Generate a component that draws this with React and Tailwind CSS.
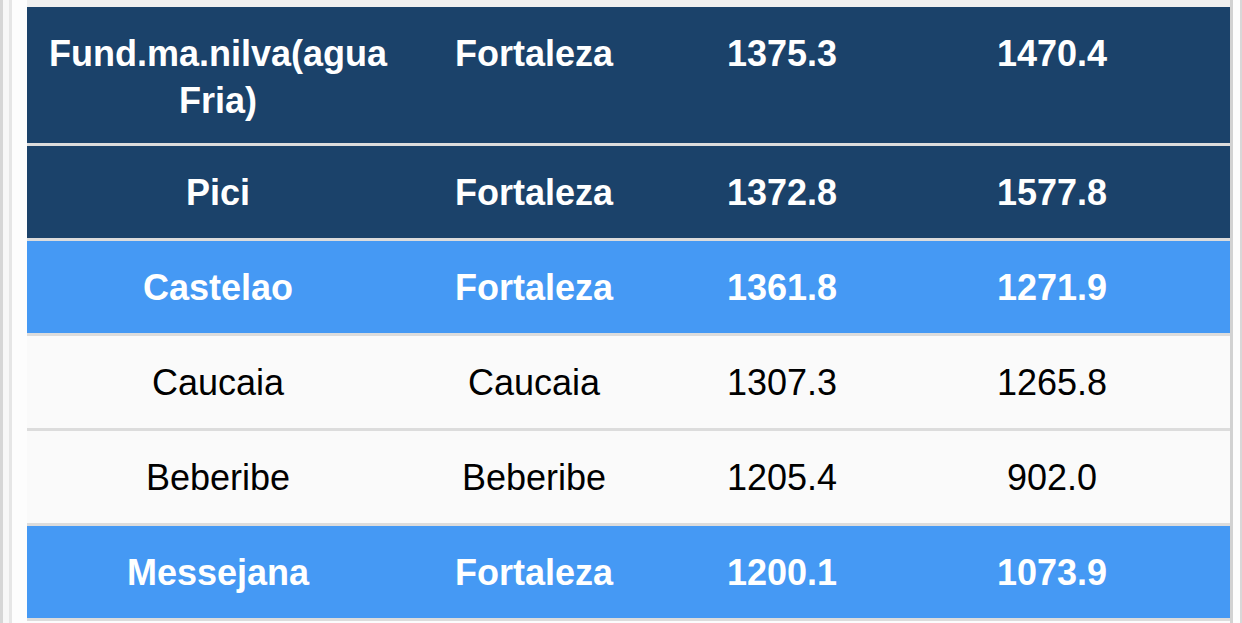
// App.jsx
const rows = [
  { name: "Fund.ma.nilva(agua Fria)", city: "Fortaleza", a: "1375.3", b: "1470.4", tone: "dark", tall: true },
  { name: "Pici", city: "Fortaleza", a: "1372.8", b: "1577.8", tone: "dark" },
  { name: "Castelao", city: "Fortaleza", a: "1361.8", b: "1271.9", tone: "blue" },
  { name: "Caucaia", city: "Caucaia", a: "1307.3", b: "1265.8", tone: "plain" },
  { name: "Beberibe", city: "Beberibe", a: "1205.4", b: "902.0", tone: "plain" },
  { name: "Messejana", city: "Fortaleza", a: "1200.1", b: "1073.9", tone: "blue" },
];

const toneClass = {
  dark: "bg-[#1b426a] text-white font-bold",
  blue: "bg-[#4599f4] text-white font-bold",
  plain: "bg-[#fafafa] text-black font-normal",
};

export default function App() {
  return (
    <div
      className="flex h-[623px] w-[1242px] overflow-hidden bg-[#fcfcfc]"
      style={{ fontFamily: '"Liberation Sans", Arial, sans-serif' }}
    >
      {/* left frame */}
      <div className="w-[3px] bg-[#d6d6d6]" />
      <div className="w-[6px] bg-[#f7f7f7]" />
      <div className="w-[3px] bg-[#e6e6e6]" />
      <div className="w-[15px] bg-[#fdfdfd]" />

      {/* table */}
      <div className="flex w-[1203px] flex-col">
        <div className="h-[7px] shrink-0 bg-[#efefef]" />
        {rows.map((row, i) => (
          <div key={row.name} className="flex shrink-0 flex-col">
            {i > 0 && <div className="h-[3px] bg-[#dcdcdc]" />}
            <div
              className={`grid grid-cols-[382px_250px_246px_294px_1fr] pt-[23px] text-[36px] leading-[47px] ${
                row.tall ? "h-[136px]" : "h-[92px]"
              } ${toneClass[row.tone]}`}
            >
              <div className="px-4 text-center">{row.name}</div>
              <div className="text-center">{row.city}</div>
              <div className="text-center">{row.a}</div>
              <div className="text-center">{row.b}</div>
              <div />
            </div>
          </div>
        ))}
        <div className="h-[3px] shrink-0 bg-[#dcdcdc]" />
      </div>

      {/* right frame */}
      <div className="w-[3px] bg-[#d2d2d2]" />
      <div className="w-[7px] bg-[#fdfdfd]" />
      <div className="w-[2px] bg-[#d8d8d8]" />
    </div>
  );
}
